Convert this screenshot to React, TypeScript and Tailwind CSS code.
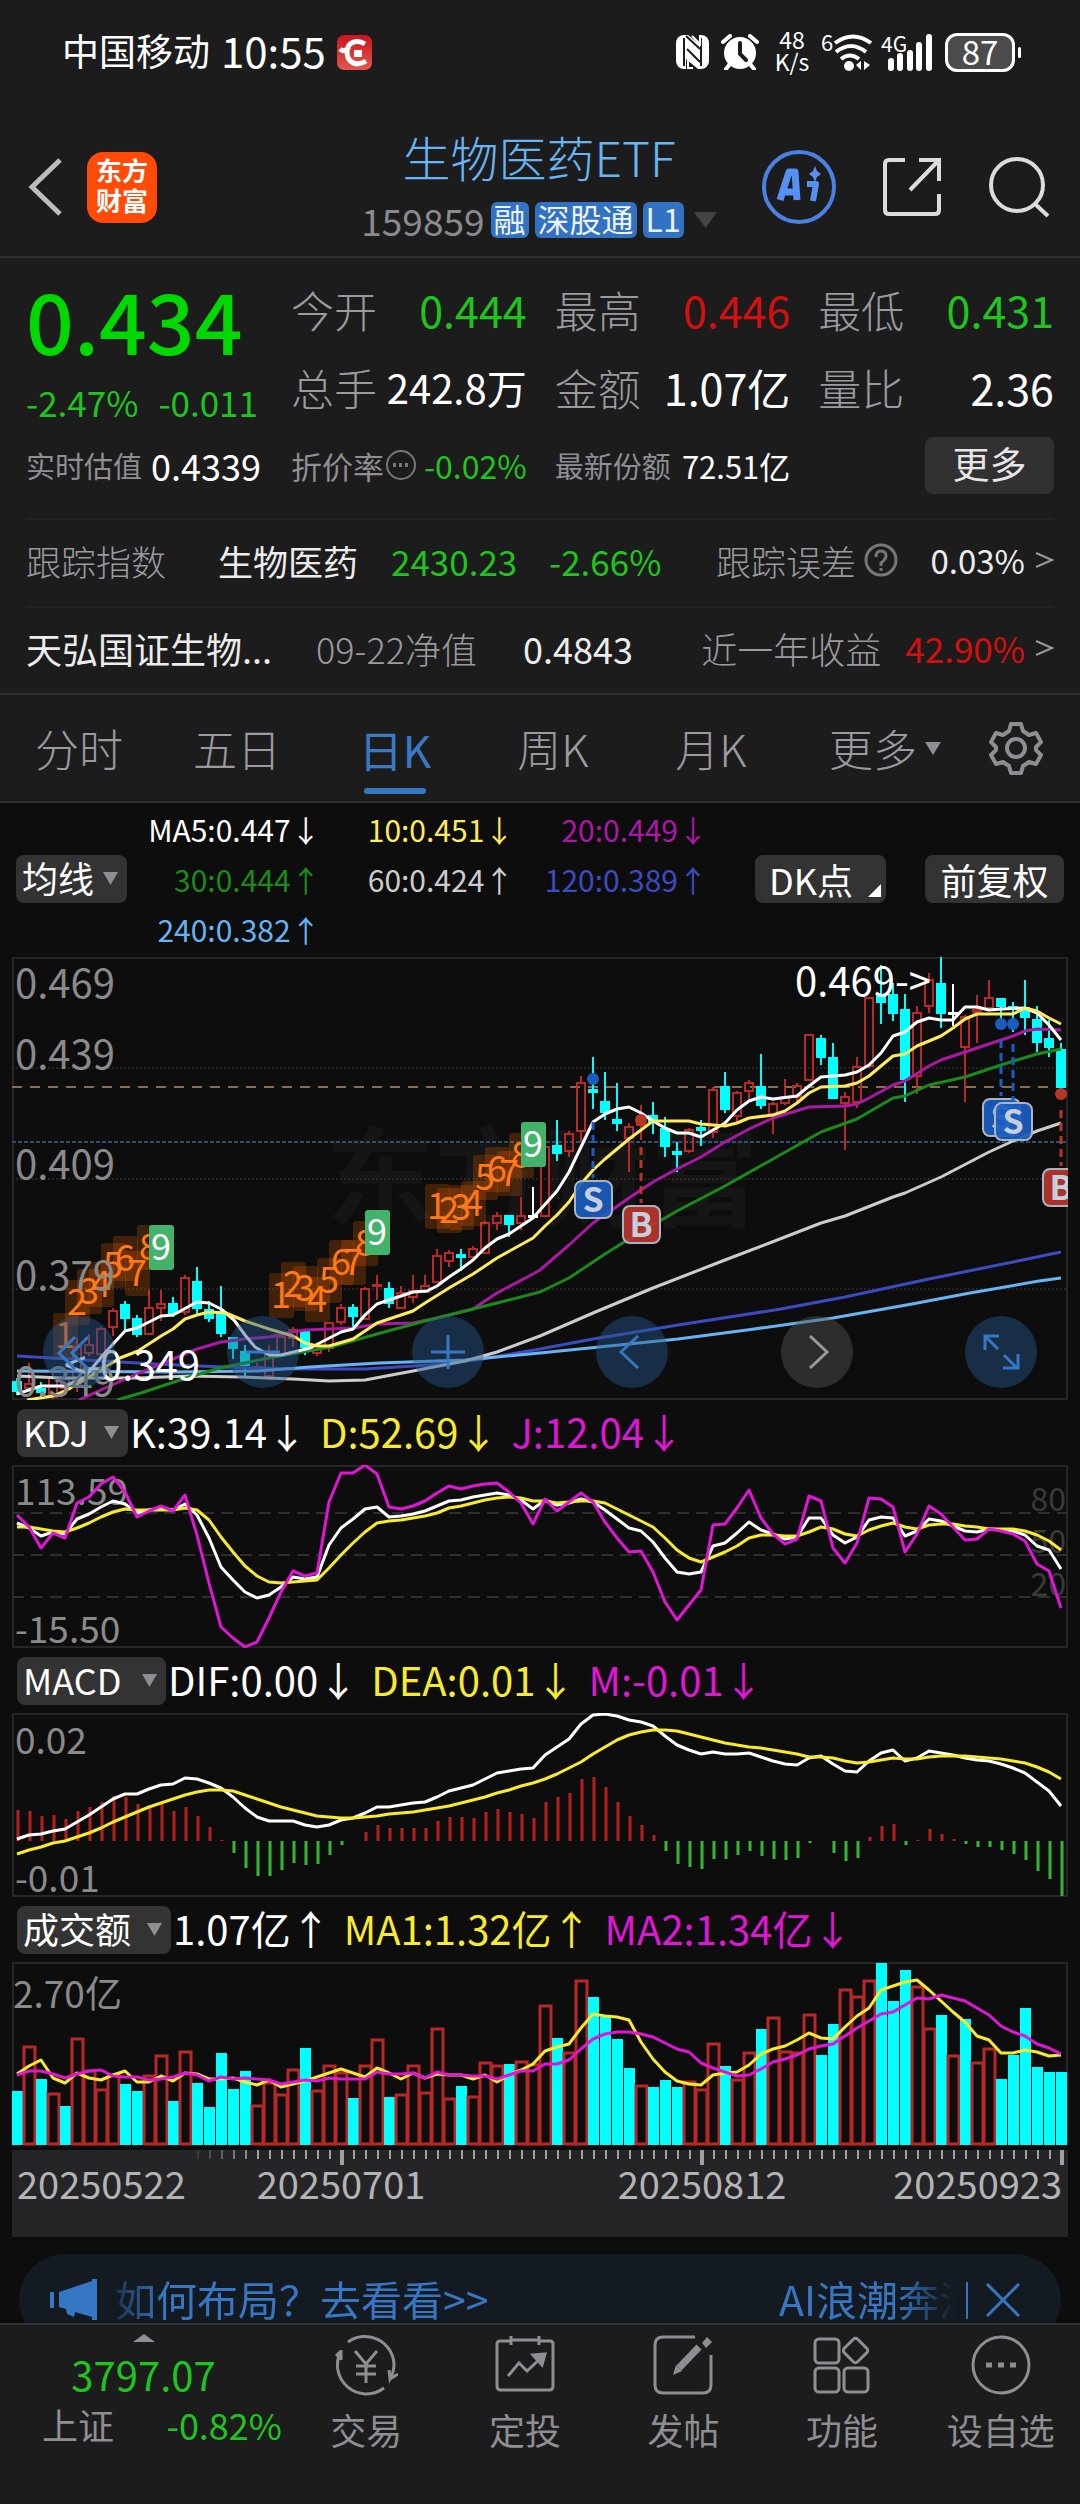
import React from 'react';

type Candle = ['r' | 'c' | 'w', number, number, number, number];

const RED = '#b82828';
const CYAN = '#00ffff';
const COLORS = { r: RED, c: CYAN, w: '#ffffff' };

// One bar every 12 units, 88 trading days
const barX = (i: number) => 17 + i * 12;
const line = (values: number[]) => values.map((v, i) => `${barX(i)},${Math.round(v / 3)}`).join(' ');

// kind, high, body top, body bottom, low
const CANDLES: Candle[] = [
  ['c', 428, 432, 441, 445], ['r', 413, 434, 438, 440], ['c', 432, 439, 442, 449], ['r', 420, 427, 447, 449],
  ['r', 425, 429, 438, 441], ['r', 388, 397, 437, 442], ['r', 384, 395, 403, 406], ['r', 377, 379, 404, 406],
  ['r', 358, 361, 377, 386], ['c', 351, 355, 368, 381], ['c', 365, 369, 384, 387], ['r', 340, 358, 384, 385],
  ['r', 340, 354, 358, 371], ['c', 347, 354, 363, 367], ['r', 325, 328, 362, 365], ['c', 317, 332, 358, 365],
  ['c', 351, 360, 368, 372], ['c', 336, 362, 383, 387], ['c', 387, 388, 398, 409], ['c', 395, 402, 415, 427],
  ['r', 413, 417, 421, 423], ['r', 395, 403, 426, 430], ['r', 385, 387, 405, 406], ['r', 377, 380, 388, 397],
  ['c', 381, 382, 397, 405], ['r', 393, 396, 403, 406], ['r', 372, 373, 398, 402], ['r', 354, 358, 372, 375],
  ['c', 354, 358, 366, 377], ['r', 337, 339, 369, 370], ['r', 325, 335, 336, 350], ['c', 332, 339, 353, 358],
  ['r', 336, 343, 358, 359], ['r', 325, 341, 347, 353], ['r', 325, 336, 342, 343], ['r', 299, 306, 332, 333],
  ['r', 300, 303, 311, 317], ['c', 299, 305, 307, 321], ['r', 296, 299, 307, 308], ['r', 271, 273, 303, 303],
  ['r', 262, 266, 273, 280], ['c', 265, 266, 274, 287], ['r', 247, 266, 273, 280], ['w', 237, 266, 267, 267],
  ['r', 190, 197, 266, 266], ['c', 170, 196, 203, 211], ['r', 181, 184, 201, 207], ['r', 126, 133, 181, 192],
  ['c', 107, 140, 142, 159], ['c', 122, 152, 162, 170], ['c', 133, 170, 173, 181], ['r', 173, 177, 188, 222],
  ['r', 155, 167, 175, 190], ['c', 152, 166, 172, 184], ['c', 167, 179, 196, 207], ['c', 192, 202, 204, 222],
  ['r', 178, 180, 201, 203], ['c', 170, 178, 180, 196], ['r', 137, 140, 182, 188], ['c', 122, 137, 159, 163],
  ['r', 141, 143, 166, 173], ['r', 130, 133, 141, 150], ['c', 104, 137, 155, 159], ['r', 152, 154, 164, 184],
  ['r', 129, 147, 153, 155], ['r', 133, 136, 147, 152], ['r', 84, 85, 130, 131], ['c', 85, 89, 107, 115],
  ['c', 93, 108, 148, 148], ['r', 142, 147, 153, 200], ['r', 107, 117, 152, 158], ['r', 47, 48, 116, 118],
  ['c', 15, 45, 52, 74], ['c', 33, 45, 63, 71], ['c', 44, 60, 129, 152], ['r', 56, 63, 126, 144],
  ['r', 23, 30, 56, 63], ['c', 7, 34, 63, 78], ['w', 34, 63, 64, 76], ['r', 65, 67, 97, 152],
  ['r', 45, 60, 62, 93], ['r', 30, 48, 58, 60], ['c', 48, 49, 56, 77], ['c', 52, 57, 59, 82],
  ['c', 30, 58, 67, 85], ['c', 56, 70, 92, 102], ['c', 70, 89, 97, 107], ['c', 93, 100, 137, 142],
];

const MA_LINES = [
  { color: '#3c4bc0', points: '17,406 86,410 155,414 224,417 293,419 365,419 430,415 482,409 540,399 593,389 678,375 781,359 845,347 929,329 1013,312 1061,302' },
  { color: '#68b4f2', points: '17,421 172,422 258,421 310,417 379,413 465,410 540,403 678,389 747,380 833,368 912,354 970,343 1039,331 1061,328' },
  { color: '#cccccc', points: '17,426 62,428 138,428 189,426 241,427 293,429 329,431 365,430 413,421 465,411 497,402 540,386 593,363 653,338 725,310 785,287 821,273 845,266 893,247 905,243 941,227 989,202 1013,191 1037,181 1061,173' },
  { color: '#ab18a6', points: '79,450 103,439 137,424 173,409 197,399 221,392 245,389 269,387 293,382 305,380 353,378 377,374 413,373 437,368 473,359 497,343 533,324 540,320 569,295 593,273 629,248 653,232 677,219 701,207 725,192 749,179 773,168 809,157 845,156 857,154 869,148 893,135 905,131 929,116 941,110 965,102 989,94 1013,86 1025,81 1037,79 1061,80' },
  { color: '#1b8a1b', points: '117,450 141,443 186,428 220,418 269,408 331,397 377,384 425,371 473,359 497,353 540,342 569,328 605,304 629,289 677,261 725,236 773,209 821,182 857,169 893,148 905,146 929,135 965,127 1001,115 1037,104 1061,99' },
  { color: '#ffffff', points: '17,444 41,436 65,436 84,428 103,405 125,381 137,378 161,366 173,365 197,352 209,353 221,359 234,370 245,385 255,397 269,405 281,405 310,398 341,382 353,379 365,365 377,354 413,342 427,341 437,336 449,327 461,319 473,310 485,298 497,289 509,284 533,268 540,260 557,241 569,222 581,197 593,172 605,164 617,159 629,157 641,163 653,171 665,178 677,183 689,183 701,187 725,173 737,160 749,151 761,147 773,149 797,146 809,136 821,127 845,125 857,122 869,115 881,103 893,86 905,82 917,72 929,68 941,70 953,70 965,57 977,57 989,60 1001,59 1025,58 1037,63 1049,75 1061,90' },
  { color: '#ffec5c', points: '27,450 53,446 69,439 120,408 138,401 161,386 173,379 185,369 197,365 209,362 226,363 245,371 269,379 293,386 305,393 317,396 329,396 353,389 365,381 377,373 413,361 425,353 449,338 473,324 497,308 533,288 545,276 557,265 569,252 581,234 593,220 605,209 629,189 653,171 689,171 701,174 725,176 737,173 749,168 773,165 785,161 797,153 809,143 821,137 845,136 857,133 869,126 893,106 905,104 917,96 929,91 941,86 953,78 965,69 977,64 1013,64 1025,58 1037,61 1049,68 1061,74' },
];

// Nine-turn sequences: first bar index and the top of each label
const NINE_TURNS = [
  { start: 4, tops: [363, 330, 319, 312, 293, 286, 301, 275, 275] },
  { start: 22, tops: [323, 312, 316, 327, 308, 290, 290, 271, 260] },
  { start: 35, tops: [234, 238, 235, 231, 205, 197, 201, 183, 172] },
];

const SIGNALS = [
  { kind: 'S', x: 593, dot: 129, from: 172, top: 231 },
  { kind: 'B', x: 641, dot: 170, from: 197, top: 256 },
  { kind: 'S', x: 1001, dot: 74, from: 90, top: 149 },
  { kind: 'S', x: 1013, dot: 74, from: 94, top: 153 },
  { kind: 'B', x: 1061, dot: 144, from: 160, top: 219 },
];

const KDJ_J = [345, 380, 445, 400, 415, 310, 290, 252, 232, 275, 350, 333, 318, 332, 285, 405, 550, 680, 715, 740, 727, 655, 575, 513, 527, 520, 305, 218, 218, 195, 222, 320, 326, 318, 302, 280, 258, 266, 258, 252, 248, 275, 310, 372, 297, 332, 305, 278, 305, 365, 415, 455, 452, 515, 605, 660, 615, 570, 375, 372, 325, 270, 355, 402, 432, 418, 288, 302, 445, 490, 428, 293, 296, 322, 455, 402, 318, 342, 382, 420, 418, 388, 392, 402, 423, 492, 512, 625];
const KDJ_K = [370, 383, 408, 395, 402, 358, 342, 322, 303, 312, 340, 330, 325, 330, 313, 345, 415, 500, 540, 575, 594, 585, 560, 532, 537, 530, 435, 383, 358, 328, 320, 350, 348, 342, 333, 318, 303, 300, 292, 285, 280, 285, 300, 327, 300, 315, 308, 297, 305, 330, 358, 383, 393, 425, 475, 517, 521, 516, 438, 430, 400, 366, 390, 403, 417, 410, 355, 353, 405, 430, 410, 360, 351, 354, 408, 393, 357, 362, 378, 393, 397, 386, 390, 394, 405, 437, 450, 507];
const KDJ_D = [381, 381, 388, 392, 395, 383, 368, 352, 336, 328, 331, 331, 330, 329, 323, 330, 360, 410, 455, 497, 528, 547, 550, 546, 543, 540, 505, 465, 430, 395, 370, 363, 360, 355, 347, 338, 325, 318, 309, 300, 294, 290, 294, 304, 304, 308, 306, 302, 303, 310, 327, 345, 362, 382, 415, 450, 473, 485, 470, 455, 437, 415, 405, 404, 408, 409, 395, 381, 388, 403, 408, 390, 378, 370, 382, 386, 376, 373, 372, 377, 382, 387, 387, 388, 392, 405, 423, 450];

const MACD_BARS = [477, 480, 495, 492, 505, 480, 468, 453, 435, 438, 459, 462, 459, 480, 468, 495, 528, 567, 606, 651, 675, 675, 657, 636, 642, 639, 612, 582, 570, 543, 522, 531, 531, 531, 531, 510, 498, 498, 501, 483, 474, 483, 489, 501, 453, 438, 426, 384, 378, 408, 453, 495, 522, 552, 600, 639, 648, 654, 624, 624, 612, 600, 615, 624, 627, 621, 576, 570, 606, 630, 621, 558, 525, 519, 582, 567, 534, 549, 564, 579, 588, 588, 597, 609, 627, 660, 684, 735];
const DIF = [563, 552, 548, 540, 533, 513, 492, 468, 443, 428, 428, 413, 402, 398, 380, 384, 396, 412, 438, 470, 497, 510, 510, 510, 522, 528, 522, 508, 502, 485, 468, 467, 462, 457, 453, 437, 420, 411, 402, 385, 367, 360, 355, 350, 313, 288, 263, 220, 192, 190, 194, 207, 213, 226, 255, 282, 297, 309, 303, 309, 309, 306, 318, 330, 339, 342, 322, 315, 338, 360, 363, 330, 306, 296, 330, 320, 299, 305, 313, 321, 327, 330, 340, 352, 366, 393, 420, 464];
const DEA = [608, 597, 587, 576, 570, 558, 547, 531, 513, 497, 482, 467, 455, 443, 432, 423, 417, 416, 420, 432, 444, 456, 467, 477, 486, 494, 498, 500, 501, 499, 495, 490, 486, 482, 477, 471, 464, 456, 448, 438, 427, 417, 406, 396, 384, 369, 352, 333, 310, 287, 267, 252, 243, 237, 237, 240, 249, 258, 267, 275, 282, 288, 291, 297, 303, 309, 318, 318, 321, 330, 336, 333, 326, 321, 323, 323, 319, 316, 315, 315, 317, 320, 324, 330, 337, 348, 363, 384];

// Negative values are falling days
const TURNOVER = [-567, 433, -531, 572, -612, 409, 505, 560, 515, -546, -567, 520, 458, -597, 448, -543, -615, -453, -561, -507, 608, 540, 575, 500, -438, 563, 488, 510, -588, 488, 412, -585, 575, 488, 570, 379, 588, -552, 583, 479, 490, -486, 476, 485, 308, -408, 450, 233, -285, -345, -411, -498, 548, -555, -534, -555, 537, 560, 422, -492, 530, 450, -381, 345, 447, 450, 336, -459, -366, 260, 282, 233, -183, -297, -204, 252, 378, -339, 459, -351, 480, 438, -531, -459, -318, -495, -510, -510];
const TURNOVER_MA1 = [517, 492, 474, 528, 542, 513, 528, 533, 520, 508, 540, 541, 522, 536, 514, 515, 530, 530, 527, 540, 548, 535, 555, 547, 537, 525, 512, 500, 512, 525, 498, 513, 530, 512, 527, 515, 520, 518, 532, 518, 540, 518, 505, 485, 448, 435, 425, 378, 336, 342, 346, 353, 420, 470, 510, 538, 546, 549, 520, 514, 510, 490, 457, 441, 432, 414, 393, 408, 411, 375, 341, 318, 264, 252, 240, 234, 263, 297, 330, 360, 402, 413, 453, 453, 443, 451, 462, 459];
const TURNOVER_MA2 = [520, 507, 507, 515, 527, 515, 508, 503, 523, 524, 525, 533, 530, 526, 514, 520, 538, 526, 530, 529, 532, 534, 545, 540, 535, 536, 527, 530, 531, 531, 510, 516, 517, 513, 527, 510, 518, 520, 522, 521, 530, 518, 508, 508, 485, 486, 474, 441, 411, 396, 390, 390, 395, 405, 423, 440, 450, 483, 497, 511, 522, 518, 500, 479, 470, 460, 440, 432, 425, 402, 378, 358, 336, 331, 308, 288, 290, 279, 288, 297, 318, 340, 372, 390, 402, 426, 438, 456];

export default function App() {
  return (
    <div className="min-h-screen flex flex-col bg-[#0d0d0d] text-white font-normal font-['Noto_Sans_CJK_SC',sans-serif]">
      <div className="bg-[#1c1c1c]">
        <StatusBar />
        <Header />
        <Quote />
        <TrackingRows />
        <Tabs />
      </div>
      <main className="px-3">
        <MaLegend />
        <PriceChart />
        <IndicatorHeader
          name="KDJ"
          options={['KDJ', 'RSI', 'BOLL']}
          width="w-[111px]"
          items={['K:39.14↓', 'D:52.69↓', 'J:12.04↓']}
        />
        <KdjChart />
        <IndicatorHeader
          name="MACD"
          options={['MACD', 'DMI', 'WR']}
          width="w-[149px]"
          items={['DIF:0.00↓', 'DEA:0.01↓', 'M:-0.01↓']}
        />
        <MacdChart />
        <IndicatorHeader
          name="成交额"
          options={['成交额', '成交量']}
          width="w-[154px]"
          items={['1.07亿↑', 'MA1:1.32亿↑', 'MA2:1.34亿↓']}
        />
        <TurnoverChart />
        <TimeAxis />
      </main>
      <Banner />
      <BottomNav />
    </div>
  );
}

function StatusBar() {
  return (
    <div className="h-[104px] flex items-center justify-between pl-[62px] pr-[59px]">
      <div className="flex items-center gap-[11px]">
        <span className="pb-1 text-[37px] leading-[48px]">中国移动</span>
        <span className="pb-1 text-[42px] leading-[48px]">10:55</span>
        <svg className="w-[35px] h-[35px]" viewBox="0 0 35 35" aria-hidden="true">
          <defs>
            <linearGradient id="notice" x1="0" y1="0" x2="0" y2="1">
              <stop offset="0" stopColor="#c9141f" />
              <stop offset="1" stopColor="#e0584f" />
            </linearGradient>
          </defs>
          <rect width="35" height="35" rx="7" fill="url(#notice)" />
          <path d="M28 9c-8-5-18-2-18 8 0 11 10 15 19 9M3 14c3 3 6 2 9-2" fill="none" stroke="#fff" strokeWidth="5" />
          <rect x="17" y="15" width="8" height="7" fill="#fff" />
        </svg>
      </div>
      <div className="flex items-center">
        <svg className="w-[33px] h-[34px]" viewBox="0 0 33 34" aria-hidden="true">
          <rect width="33" height="34" rx="8" fill="#fff" />
          <path d="M8 3v28M25 3v28M10 1l14 13M11 14l13 13" stroke="#1c1c1c" strokeWidth="2" fill="none" />
          <path d="M12 0h11v9zM10 34h12L10 24z" fill="#1c1c1c" />
          <path d="M12 20v13h5M16 1l8 8V0" stroke="#fff" strokeWidth="2" fill="none" />
        </svg>
        <svg className="w-[38px] h-[36px] ml-3" viewBox="0 0 38 36" aria-hidden="true">
          <circle cx="19" cy="19" r="16" fill="#fff" />
          <path d="M2 8l7-6M36 8l-7-6M9 30l-4 5M29 30l4 5" stroke="#fff" strokeWidth="4" strokeLinecap="round" fill="none" />
          <path d="M19 9v11l6 6" stroke="#1c1c1c" strokeWidth="4" strokeLinecap="round" fill="none" />
        </svg>
        <div className="w-[50px] ml-2 pb-1 text-center text-[23px] leading-[22px]">
          <div>48</div>
          <div>K/s</div>
        </div>
        <svg className="w-[52px] h-[40px] ml-1" viewBox="0 0 52 40" aria-hidden="true">
          <text x="0" y="19" fontSize="22" fill="#fff">6</text>
          <path d="M14 11q18-13 36 0M15 20q15-12 30 0M20 27q9-7 18 0" stroke="#fff" strokeWidth="4" fill="none" />
          <circle cx="28" cy="34" r="5" fill="#fff" />
          <path d="M40 29v9l-5-5zM43 29v9l6-5z" fill="#fff" />
        </svg>
        <svg className="w-[54px] h-[40px] ml-2" viewBox="0 0 54 40" aria-hidden="true">
          <text x="0" y="20" fontSize="21" fill="#fff">4G</text>
          <path d="M10 36v-7M19 36V24M29 36V21M38 36V13M48 36V5" stroke="#fff" strokeWidth="6" strokeLinecap="round" />
        </svg>
        <div className="flex items-center ml-[10px]">
          <div className="w-[70px] h-[39px] rounded-[12px] border-3 border-white bg-[#4c4c4c] text-[33px] leading-[30px] text-center">87</div>
          <div className="w-[3px] h-[11px] ml-[3px] bg-white rounded-sm" />
        </div>
      </div>
    </div>
  );
}

function Header() {
  return (
    <header className="h-[154px] grid grid-cols-[1fr_auto_1fr] items-center pt-[14px] pl-[28px] pr-[30px] border-b-2 border-[#2f2f2f]">
      <div className="flex items-center gap-[24px]">
        <button aria-label="返回">
          <svg className="w-[35px] h-[58px]" viewBox="0 0 35 58" fill="none" stroke="#bdbdbd" strokeWidth="5">
            <path d="M32 2L4 29l28 27" />
          </svg>
        </button>
        <div className="w-[70px] h-[71px] rounded-[16px] bg-[#ff4a08] flex flex-col items-center justify-center pb-1 font-bold text-[26px] leading-[30px]">
          <span>东方</span>
          <span>财富</span>
        </div>
      </div>
      <div className="flex flex-col items-center gap-[12px] pb-[2px]">
        <h1 className="text-[48px] leading-[56px] text-[#68b4f2] font-light">生物医药ETF</h1>
        <div className="flex items-center gap-[6px] leading-[48px]">
          <span className="text-[37px] text-[#8a8a8f]">159859</span>
          <Tag>融</Tag>
          <Tag>深股通</Tag>
          <Tag>L1</Tag>
          <svg className="w-[23px] h-[16px] ml-1" viewBox="0 0 23 16" aria-hidden="true">
            <path d="M0 0h23L11.500 16z" fill="#444" />
          </svg>
        </div>
      </div>
      <div className="flex items-center justify-end gap-[46px]">
        <button aria-label="AI">
          <svg className="w-[74px] h-[76px]" viewBox="0 0 74 76">
            <circle cx="37" cy="38" r="35" fill="none" stroke="#4a82e4" strokeWidth="4" />
            <path d="M18 51l9-28h6l2 28M21 43h13" fill="none" stroke="#5590f5" strokeWidth="7" strokeLinejoin="round" />
            <path d="M45 35h9l-3 17" fill="none" stroke="#5590f5" strokeWidth="6" strokeLinejoin="round" />
            <path d="M53 17l2 5 4 3-4 3-2 5-2-5-4-3 4-3z" fill="#5590f5" />
          </svg>
        </button>
        <button aria-label="分享">
          <svg className="w-[60px] h-[60px]" viewBox="0 0 60 60" fill="none" stroke="#dcdcdc" strokeWidth="4">
            <path d="M23 3H7q-4 0-4 4v46q0 4 4 4h46q4 0 4-4V37M37 3h20v21M57 3L28 33" />
          </svg>
        </button>
        <button aria-label="搜索">
          <svg className="w-[62px] h-[62px]" viewBox="0 0 62 62" fill="none" stroke="#dcdcdc" strokeWidth="4">
            <circle cx="29" cy="29" r="26" />
            <path d="M46 47l14 13" />
          </svg>
        </button>
      </div>
    </header>
  );
}

function Tag({ children }: { children: React.ReactNode }) {
  return <span className="h-[36px] px-[3px] rounded-[6px] bg-[#3272c0] text-[32px] leading-[33px] text-[#eaf3ff]">{children}</span>;
}

function Stat({ label, value, color, size }: { label: string; value: string; color: string; size: string }) {
  return (
    <div className="flex items-center justify-between whitespace-nowrap">
      <span className="text-[43px] leading-none font-light text-[#9a9a9f]">{label}</span>
      <span className={`${size} ${color} leading-none`}>{value}</span>
    </div>
  );
}

function Quote() {
  return (
    <section className="pt-[12px] pb-[14px] px-[26px] flex">
      <div className="w-[265px] shrink-0">
        <div className="h-[106px] text-[84px] leading-[98px] font-medium text-[#00d900]">0.434</div>
        <div className="h-[50px] flex items-center gap-5 text-[35px] leading-none text-[#1fc41f]">
          <span>-2.47%</span>
          <span>-0.011</span>
        </div>
        <div className="h-[78px] flex items-center gap-[9px] leading-none">
          <span className="text-[29px] text-[#8e8e93]">实时估值</span>
          <span className="text-[36px]">0.4339</span>
        </div>
      </div>
      <div className="flex-1 grid grid-cols-3 auto-rows-[78px] gap-x-7">
        <Stat label="今开" value="0.444" color="text-[#1fc41f]" size="text-[43px]" />
        <Stat label="最高" value="0.446" color="text-[#d40f0f]" size="text-[43px]" />
        <Stat label="最低" value="0.431" color="text-[#1fc41f]" size="text-[43px]" />
        <Stat label="总手" value="242.8万" color="text-white" size="text-[40px]" />
        <Stat label="金额" value="1.07亿" color="text-white" size="text-[43px]" />
        <Stat label="量比" value="2.36" color="text-white" size="text-[43px]" />
        <div className="flex items-center leading-none whitespace-nowrap">
          <span className="text-[31px] text-[#8e8e93]">折价率</span>
          <svg className="w-[33px] h-[33px]" viewBox="0 0 33 33" aria-hidden="true">
            <circle cx="17" cy="16" r="14" fill="none" stroke="#77777b" strokeWidth="2" />
            <path d="M9 16h3M15 16h3M21 16h3" stroke="#77777b" strokeWidth="4" />
          </svg>
          <span className="ml-auto text-[32px] text-[#1fc41f]">-0.02%</span>
        </div>
        <div className="flex items-center justify-between leading-none whitespace-nowrap">
          <span className="text-[29px] text-[#8e8e93]">最新份额</span>
          <span className="text-[31px]">72.51亿</span>
        </div>
        <div className="flex items-center justify-end">
          <button className="w-[129px] h-[57px] rounded-lg bg-[#313131] text-[37px] leading-none pb-1 text-[#e6e6e6]">更多</button>
        </div>
      </div>
    </section>
  );
}

function TrackingRows() {
  return (
    <section className="border-b-2 border-[#2f2f2f]">
      <div className="mx-[26px] h-[88px] pb-[6px] flex items-center border-t-2 border-[#232323] text-[35px] leading-none whitespace-nowrap">
        <span className="w-[192px] font-light text-[#9a9a9f]">跟踪指数</span>
        <span className="w-[173px] text-[#ececec]">生物医药</span>
        <span className="w-[158px] text-[#1fc41f]">2430.23</span>
        <span className="w-[167px] text-[#1fc41f]">-2.66%</span>
        <span className="font-light text-[#9a9a9f]">跟踪误差</span>
        <svg className="w-[35px] h-[35px] ml-2" viewBox="0 0 35 35" fill="none" stroke="#77777b" strokeWidth="3" aria-hidden="true">
          <circle cx="17" cy="17" r="15" />
          <path d="M12 14q0-6 5-6t5 5q0 3-5 7v3M17 25v3" />
        </svg>
        <span className="ml-auto text-[33px] text-[#ececec]">0.03%</span>
        <MoreArrow />
      </div>
      <div className="mx-[26px] h-[87px] pb-[6px] flex items-center border-t-2 border-[#232323] text-[36px] leading-none whitespace-nowrap">
        <a href="#fund" className="w-[290px] text-[#ececec]">天弘国证生物...</a>
        <span className="w-[207px] font-light text-[#9a9a9f]">09-22净值</span>
        <span className="text-[#ececec]">0.4843</span>
        <span className="ml-auto mr-6 font-light text-[#9a9a9f]">近一年收益</span>
        <span className="text-[35px] text-[#d40f0f]">42.90%</span>
        <MoreArrow />
      </div>
    </section>
  );
}

function MoreArrow() {
  return (
    <svg className="w-[19px] h-[20px] ml-[10px]" viewBox="0 0 19 20" fill="none" stroke="#9a9a9e" strokeWidth="2" aria-hidden="true">
      <path d="M1 3l16 7-16 7" />
    </svg>
  );
}

function Tabs() {
  return (
    <nav className="h-[108px] grid grid-cols-[79fr_79fr_79fr_79fr_79fr_95fr_36fr] items-center pr-7 border-b-2 border-[#2f2f2f] text-[44px] leading-[60px] font-light text-[#9a9a9f]">
      <button>分时</button>
      <button>五日</button>
      <button className="h-full flex flex-col items-center justify-end gap-[9px] pb-[7px] font-normal text-[#3a7ac4]">
        日K
        <span className="w-[62px] h-[6px] rounded-full bg-[#3677c4]" />
      </button>
      <button>周K</button>
      <button>月K</button>
      <button className="flex items-center justify-center gap-2">
        更多
        <svg className="w-[16px] h-[13px]" viewBox="0 0 16 13" aria-hidden="true">
          <path d="M0 0h16l-8 13z" fill="#8e8e93" />
        </svg>
      </button>
      <button aria-label="设置" className="flex justify-center">
        <svg className="w-[54px] h-[54px] shrink-0" viewBox="0 0 54 54" fill="none" stroke="#8e8e93" strokeWidth="4">
          <path d="M22 3h10l2 7 6 4 7-2 5 9-5 5v3l5 5-5 9-7-2-6 4-2 7H22l-2-7-6-4-7 2-5-9 5-5v-3l-5-5 5-9 7 2 6-4z" strokeLinejoin="round" />
          <circle cx="27" cy="27" r="9" />
        </svg>
      </button>
    </nav>
  );
}

function Dropdown({ name, options, width }: { name: string; options: string[]; width: string }) {
  return (
    <label className={`relative ${width} h-[48px] shrink-0`}>
      <select
        aria-label={name}
        defaultValue={name}
        className="w-full h-full appearance-none rounded-lg bg-[#333] pl-[6px] pb-1 text-[36px] leading-[44px] text-white"
      >
        {options.map(o => <option key={o}>{o}</option>)}
      </select>
      <svg className="absolute right-[9px] top-[17px] w-[15px] h-[13px] pointer-events-none" viewBox="0 0 15 13" aria-hidden="true">
        <path d="M0 0h15L7.500 13z" fill="#8e8e93" />
      </svg>
    </label>
  );
}

function MaLegend() {
  return (
    <div className="h-[154px] flex items-center px-1 pb-[2px]">
      <Dropdown name="均线" options={['均线', 'BOLL']} width="w-[111px]" />
      <div className="w-[581px] grid grid-cols-3 auto-rows-[50px] items-center text-right text-[30px] leading-none whitespace-nowrap">
        <span>MA5:0.447↓</span>
        <span className="text-[#ffec5c]">10:0.451↓</span>
        <span className="text-[#ab18a6]">20:0.449↓</span>
        <span className="text-[#1b8a1b]">30:0.444↑</span>
        <span className="text-[#cccccc]">60:0.424↑</span>
        <span className="text-[#3c4bc0]">120:0.389↑</span>
        <span className="text-[#68b4f2]">240:0.382↑</span>
      </div>
      <button className="relative ml-auto w-[131px] h-[48px] rounded-lg bg-[#333] pl-[14px] text-left text-[36px] leading-[44px]">
        DK点
        <svg className="absolute right-[5px] bottom-[6px] w-[13px] h-[13px]" viewBox="0 0 13 13" aria-hidden="true">
          <path d="M13 0v13H0z" fill="#fff" />
        </svg>
      </button>
      <button className="ml-[39px] w-[139px] h-[48px] rounded-lg bg-[#333] text-[36px] leading-[44px]">前复权</button>
    </div>
  );
}

function PriceChart() {
  return (
    <div className="relative">
      <svg className="block w-full h-auto" viewBox="12 7 1056 443">
        <text x="326" y="268" fontSize="108" fontWeight="700" fill="#151515">东方财富</text>
        <rect x="13" y="8" width="1054" height="441" fill="none" stroke="#262626" strokeWidth="2" />
        <path d="M12 118h1056M12 229h1056M12 339h1056" stroke="#3a3a3a" strokeWidth="1" strokeDasharray="2 2" />
        <path d="M12 137h1056" stroke="#8a6d4d" strokeWidth="2" strokeDasharray="10 8" />
        <path d="M12 192h1056" stroke="#2c4f74" strokeWidth="2" strokeDasharray="4 2" />
        {CANDLES.map((c, i) => <CandleBar key={i} index={i} candle={c} />)}
        {MA_LINES.map(l => (
          <polyline key={l.color} points={l.points} fill="none" stroke={l.color} strokeWidth="3" strokeLinejoin="round" />
        ))}
        {NINE_TURNS.map(t => t.tops.map((top, i) => (
          <g key={`${t.start}-${i}`}>
            <rect
              x={barX(t.start + i) - 12}
              y={top}
              width="25"
              height="45"
              rx="3"
              fill={i === 8 ? '#43b36b' : '#ff6a00'}
              fillOpacity={i === 8 ? 1 : 0.22}
            />
            <text x={barX(t.start + i)} y={top + 35} textAnchor="middle" fontSize="36" fill={i === 8 ? '#fff' : '#ff7a1a'}>
              {i + 1}
            </text>
          </g>
        )))}
        {SIGNALS.map(s => {
          const color = s.kind === 'S' ? '#1a5cc0' : '#b8352a';
          return (
            <g key={s.x}>
              <circle cx={s.x} cy={s.dot} r="6" fill={color} />
              <path d={`M${s.x} ${s.from}V${s.top - 3}`} stroke={color} strokeWidth="3" strokeDasharray="8 5" />
              <rect x={s.x - 18} y={s.top} width="37" height="37" rx="7" fill={color} fillOpacity="0.92" stroke="#aab4c4" strokeWidth="2" />
              <text x={s.x} y={s.top + 31} textAnchor="middle" fontSize="34" fontWeight="700" fill="#c6cfdd">{s.kind}</text>
            </g>
          );
        })}
        <g fontSize="40" fill="#8a8a8a">
          <text x="15" y="48">0.469</text>
          <text x="15" y="119">0.439</text>
          <text x="15" y="229">0.409</text>
          <text x="15" y="340">0.379</text>
          <text x="15" y="446">0.349</text>
        </g>
        <text x="795" y="46" fontSize="40" fill="#fff">0.469-&gt;</text>
        <text x="200" y="430" fontSize="40" fill="#fff" textAnchor="end">&lt;-0.349</text>
      </svg>
      <div className="absolute inset-x-0 bottom-[12px] px-[31px] flex justify-between">
        <RoundButton label="最早"><path d="M45 21L29 37l16 16M32 21L16 37l16 16" /></RoundButton>
        <RoundButton label="缩小"><path d="M19 36h34" /></RoundButton>
        <RoundButton label="放大"><path d="M19 36h34M36 19v34" /></RoundButton>
        <RoundButton label="左移"><path d="M42 20L25 36l17 16" /></RoundButton>
        <RoundButton label="右移" muted><path d="M29 20l17 16-17 16" /></RoundButton>
        <RoundButton label="全屏"><path d="M34 20H20v14M20 20l13 13M39 39l14 14M53 38v14H38" /></RoundButton>
      </div>
    </div>
  );
}

function CandleBar({ index, candle }: { index: number; candle: Candle }) {
  const [kind, high, top, bottom, low] = candle;
  const x = barX(index);
  const hollow = kind === 'r';
  return (
    <g stroke={COLORS[kind]} strokeWidth="2">
      <path d={`M${x} ${high}V${top}M${x} ${bottom}V${low}`} />
      <rect x={x - 4} y={top} width="8" height={Math.max(bottom - top, 1)} fill={hollow ? 'none' : COLORS[kind]} />
    </g>
  );
}

function RoundButton({ label, muted, children }: { label: string; muted?: boolean; children: React.ReactNode }) {
  return (
    <button
      aria-label={label}
      className={`w-[72px] h-[72px] rounded-full ${muted ? 'bg-[#555555]/45 text-[#9a9a9a]' : 'bg-[#26568c]/45 text-[#3677c4]'}`}
    >
      <svg viewBox="0 0 72 72" fill="none" stroke="currentColor" strokeWidth="3">{children}</svg>
    </button>
  );
}

function IndicatorHeader({ name, options, width, items }: { name: string; options: string[]; width: string; items: string[] }) {
  return (
    <div className="h-[65px] flex items-center pl-[5px] text-[40px] leading-none whitespace-nowrap">
      <Dropdown name={name} options={options} width={width} />
      <span className="ml-[2px] mr-[13px] pb-1">{items[0]}</span>
      <span className="mr-[13px] pb-1 text-[#f8ea2c]">{items[1]}</span>
      <span className="pb-1 text-[#e016d6]">{items[2]}</span>
    </div>
  );
}

function KdjChart() {
  return (
    <svg className="block w-full h-auto" viewBox="12 65 1056 183">
      <rect x="13" y="66" width="1054" height="181" fill="none" stroke="#262626" strokeWidth="2" />
      <path d="M12 113h1056M12 155h1056M12 197h1056" stroke="#2e2e2e" strokeWidth="2" strokeDasharray="12 7" />
      <g fontSize="32" fill="#3a3a3a" textAnchor="end">
        <text x="1066" y="111">80</text>
        <text x="1066" y="153">50</text>
        <text x="1066" y="196">20</text>
      </g>
      <g fontSize="37" fill="#8a8a8a">
        <text x="15" y="105">113.59</text>
        <text x="15" y="243">-15.50</text>
      </g>
      <g fill="none" strokeWidth="3" strokeLinejoin="round">
        <polyline points={line(KDJ_K)} stroke="#fff" />
        <polyline points={line(KDJ_D)} stroke="#f8ea2c" />
        <polyline points={line(KDJ_J)} stroke="#e016d6" />
      </g>
    </svg>
  );
}

function MacdChart() {
  return (
    <svg className="block w-full h-auto" viewBox="12 62 1056 184">
      <rect x="13" y="63" width="1054" height="182" fill="none" stroke="#262626" strokeWidth="2" />
      <g fontSize="37" fill="#8a8a8a">
        <text x="15" y="103">0.02</text>
        <text x="15" y="241">-0.01</text>
      </g>
      {MACD_BARS.map((v, i) => (
        <path key={i} d={`M${barX(i) + 1} 190V${Math.round(v / 3)}`} stroke={v < 570 ? '#b82020' : '#35b835'} strokeWidth="3" />
      ))}
      <g fill="none" strokeWidth="3" strokeLinejoin="round">
        <polyline points={line(DIF)} stroke="#fff" />
        <polyline points={line(DEA)} stroke="#f8ea2c" />
      </g>
    </svg>
  );
}

function TurnoverChart() {
  return (
    <svg className="block w-full h-auto" viewBox="12 60 1056 184">
      <path d="M13 244V61h1054v183" fill="none" stroke="#262626" strokeWidth="2" />
      <text x="13" y="106" fontSize="37" fill="#8a8a8a">2.70亿</text>
      {TURNOVER.map((v, i) => {
        const top = Math.round(Math.abs(v) / 3);
        return v < 0
          ? <rect key={i} x={barX(i) - 5} y={top} width="11" height={243 - top} fill={CYAN} />
          : <rect key={i} x={barX(i) - 5} y={top + 1} width="11" height={241 - top} fill="none" stroke={RED} strokeWidth="3" />;
      })}
      <g fill="none" strokeWidth="3" strokeLinejoin="round">
        <polyline points={line(TURNOVER_MA1)} stroke="#f8ea2c" />
        <polyline points={line(TURNOVER_MA2)} stroke="#e016d6" />
      </g>
    </svg>
  );
}

function TimeAxis() {
  return (
    <svg className="block w-full h-auto mt-1 bg-[#252527]" viewBox="12 0 1056 87">
      {Array.from({ length: 73 }, (_, n) => n + 15).map(i => {
        const major = i % 30 === 27;
        return (
          <path
            key={i}
            d={`M${barX(i) + 1} 0V${major ? 15 : 9}`}
            stroke="#a0a0a0"
            strokeWidth={major ? 4 : 2}
            opacity={Math.min(1, (i - 14) / 6)}
          />
        );
      })}
      <g fontSize="38" fill="#b4b4b4">
        <text x="17" y="49">20250522</text>
        <text x="341" y="49" textAnchor="middle">20250701</text>
        <text x="702" y="49" textAnchor="middle">20250812</text>
        <text x="1062" y="49" textAnchor="end">20250923</text>
      </g>
    </svg>
  );
}

function Banner() {
  return (
    <div className="mt-[17px] h-[69px] px-[19px] overflow-hidden">
      <div className="h-[92px] rounded-[46px] bg-[#131a22] flex items-center pl-[31px] pr-[41px] text-[41px] leading-none text-[#3777c2] whitespace-nowrap">
        <svg className="w-[48px] h-[42px] shrink-0" viewBox="0 0 48 42" fill="#3677c4" aria-hidden="true">
          <path d="M0 13h4v16H0zM9 13L42 2V0h5v41h-5v-3l-17-5-1 5-7-3-1-5-7-2z" />
        </svg>
        <div className="ml-[17px] flex-1 flex items-center justify-between overflow-hidden mask-[linear-gradient(to_right,transparent_-20px,black_50px,black_calc(100%-60px),transparent)]">
          <a href="#news" className="pt-1 pb-2">如何布局？去看看&gt;&gt;</a>
          <a href="#ai" className="w-[178px] pt-1 pb-2 overflow-hidden">AI浪潮奔涌</a>
        </div>
        <span className="w-[2px] h-[37px] ml-[9px] bg-[#3777c2]" />
        <button aria-label="关闭" className="ml-[18px]">
          <svg className="w-[34px] h-[34px]" viewBox="0 0 34 34" fill="none" stroke="#3777c2" strokeWidth="3">
            <path d="M1 1l32 32M33 1L1 33" />
          </svg>
        </button>
      </div>
    </div>
  );
}

function NavItem({ label, children }: { label: string; children: React.ReactNode }) {
  return (
    <button className="flex-1 flex flex-col items-center pt-[8px] text-[36px] leading-[40px]">
      <svg className="w-[64px] h-[64px]" viewBox="0 0 64 64" fill="none" stroke="#8e8e93" strokeWidth="3" aria-hidden="true">{children}</svg>
      <span className="mt-[12px]">{label}</span>
    </button>
  );
}

function BottomNav() {
  return (
    <footer className="flex-1 min-h-[180px] flex items-start bg-[#1c1c1c] border-t-2 border-[#333] text-[#8e8e93]">
      <button className="w-[287px] shrink-0 flex flex-col items-center pt-[9px] leading-none">
        <svg className="w-[22px] h-[8px]" viewBox="0 0 22 8" aria-hidden="true">
          <path d="M0 8h22L11 0z" fill="#8e8e93" />
        </svg>
        <span className="mt-[8px] text-[40px] leading-[48px] text-[#1fc41f]">3797.07</span>
        <span className="mt-1 w-full flex justify-between pl-[42px] pr-[5px] text-[36px] leading-[44px]">
          上证
          <span className="text-[#1fc41f]">-0.82%</span>
        </span>
      </button>
      <NavItem label="交易">
        <path d="M14 9a29 29 0 0 1 46 22q0 8-4 15l-1-9M56 46l8-5M50 55A29 29 0 0 1 7 18l-5 5M7 17v10" />
        <path d="M21 18l11 13 11-13M22 33h20M22 41h20M32 31v19" />
      </NavItem>
      <NavItem label="定投">
        <path d="M18 8H7q-3 0-3 3v42q0 4 4 4h48q4 0 4-4V11q0-3-3-3H46M18 3v9M46 3v9M18 7h28" />
        <path d="M15 43l11-13 8 8 15-14" />
        <path d="M40 22l12-1-3 11z" fill="#8e8e93" />
      </NavItem>
      <NavItem label="发帖">
        <path d="M44 4H12q-8 0-8 8v40q0 8 8 8h40q8 0 8-8V22" />
        <path d="M28 35l20-21" strokeWidth="7" />
        <path d="M22 42l3-10 6 6zM51 10l5-6 5 5-6 6z" fill="#8e8e93" stroke="none" />
      </NavItem>
      <NavItem label="功能">
        <rect x="5" y="6" width="24" height="24" rx="4" />
        <rect x="5" y="35" width="24" height="24" rx="4" />
        <rect x="34" y="35" width="24" height="24" rx="4" />
        <rect x="36" y="8" width="19" height="19" rx="3" transform="rotate(45 45.500 17.500)" />
      </NavItem>
      <NavItem label="设自选">
        <circle cx="32" cy="32" r="28" />
        <path d="M17 32h6M29 32h6M41 32h6" strokeWidth="5" />
      </NavItem>
    </footer>
  );
}
